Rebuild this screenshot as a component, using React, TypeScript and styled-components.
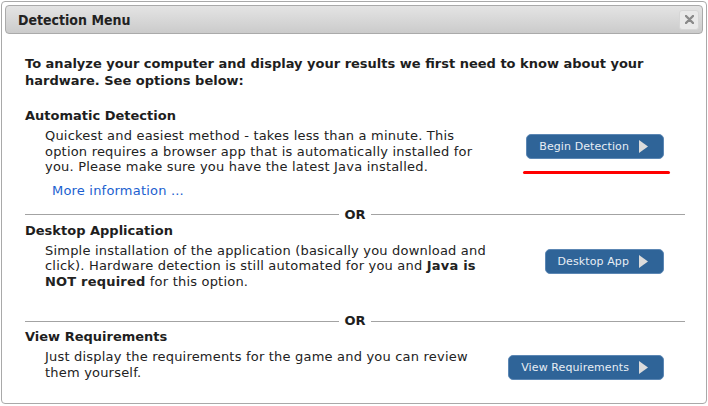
import React from "react";
import styled, { createGlobalStyle } from "styled-components";

const GlobalStyle = createGlobalStyle`
  html, body {
    margin: 0;
    padding: 0;
    background: #ffffff;
  }
`;

const Dialog = styled.div`
  margin: 1px;
  width: 706px;
  height: 403px;
  box-sizing: border-box;
  padding: 3px;
  border: 1px solid #a9a9a9;
  border-radius: 4px;
  background: #ffffff;
  font-family: "DejaVu Sans", Verdana, sans-serif;
  color: #222222;
`;

const TitleBar = styled.div`
  display: flex;
  align-items: center;
  justify-content: space-between;
  height: 29px;
  box-sizing: border-box;
  padding: 0 3px 0 12px;
  border: 1px solid #aaaaaa;
  border-radius: 4px;
  background: linear-gradient(#e4e4e4, #cbcbcb);
`;

const Title = styled.span`
  font-family: "DejaVu Sans Condensed", "DejaVu Sans", sans-serif;
  font-size: 14px;
  font-weight: bold;
  color: #222222;
`;

const CloseButton = styled.button`
  display: flex;
  align-items: center;
  justify-content: center;
  width: 20px;
  height: 20px;
  padding: 0;
  border: 1px solid #d6d6d6;
  border-radius: 3px;
  background: #e9e9e9;
  cursor: pointer;
`;

const Content = styled.div`
  padding: 21px 18px 0 20px;
`;

const Intro = styled.p`
  margin: 0;
  font-size: 13px;
  font-weight: bold;
  line-height: 17px;
  color: #1e1e1e;
`;

const Section = styled.section<{ $top: number; $bottom: number }>`
  margin-top: ${({ $top }) => $top}px;
  padding-bottom: ${({ $bottom }) => $bottom}px;
`;

const Heading = styled.h3`
  margin: 0;
  font-size: 13px;
  font-weight: bold;
  line-height: 17px;
  color: #1e1e1e;
`;

const Row = styled.div`
  display: flex;
  margin-top: 4px;
`;

const Description = styled.p`
  width: 446px;
  margin: 0;
  padding-left: 20px;
  font-size: 13px;
  line-height: 15.5px;
  letter-spacing: 0.2px;
  color: #222222;
`;

const ButtonCell = styled.div`
  flex: 1;
  display: flex;
  justify-content: flex-end;
  align-items: flex-start;
  padding: 6px 21px 0 0;
`;

const ButtonWrap = styled.div`
  position: relative;
`;

const ActionButton = styled.button`
  display: flex;
  align-items: center;
  gap: 10px;
  height: 25px;
  box-sizing: border-box;
  padding: 0 15px 0 12px;
  border: 1px solid #5c87b4;
  border-radius: 5px;
  background: #2f6498;
  color: #e8eef5;
  font-family: "DejaVu Sans", Verdana, sans-serif;
  font-size: 11px;
  letter-spacing: 0.1px;
  cursor: pointer;
`;

const Underline = styled.div`
  position: absolute;
  top: 37px;
  left: -3px;
  width: 147px;
  height: 3px;
  border-radius: 2px;
  background: #ff0000;
`;

const MoreLink = styled.a`
  display: block;
  margin-top: 8px;
  padding-left: 27px;
  font-size: 13px;
  line-height: 16px;
  letter-spacing: 0.2px;
  color: #1c5fd0;
  text-decoration: none;
`;

const Divider = styled.div`
  display: flex;
  align-items: center;
  gap: 5px;
  height: 14px;
`;

const Rule = styled.div`
  flex: 1;
  height: 1px;
  background: #a3a3a3;
`;

const OrLabel = styled.span`
  font-size: 13px;
  font-weight: bold;
  line-height: 14px;
  color: #1e1e1e;
`;

const Arrow = () => (
  <svg width="9" height="13" viewBox="0 0 9 13">
    <polygon points="0,0 9,6.5 0,13" fill="#dcdcdc" />
  </svg>
);

const CloseIcon = () => (
  <svg width="9" height="9" viewBox="0 0 9 9">
    <path d="M1 1 L8 8 M8 1 L1 8" stroke="#8a8a8a" strokeWidth="2.4" strokeLinecap="round" />
  </svg>
);

const OrDivider = () => (
  <Divider>
    <Rule />
    <OrLabel>OR</OrLabel>
    <Rule />
  </Divider>
);

const App = () => {
  return (
    <>
      <GlobalStyle />
      <Dialog>
        <TitleBar>
          <Title>Detection Menu</Title>
          <CloseButton aria-label="close">
            <CloseIcon />
          </CloseButton>
        </TitleBar>
        <Content>
          <Intro>
            To analyze your computer and display your results we first need to know about your
            hardware. See options below:
          </Intro>

          <Section $top={18} $bottom={9}>
            <Heading>Automatic Detection</Heading>
            <Row>
              <Description>
                Quickest and easiest method - takes less than a minute. This option requires a
                browser app that is automatically installed for you. Please make sure you have the
                latest Java installed.
              </Description>
              <ButtonCell>
                <ButtonWrap>
                  <ActionButton>
                    Begin Detection
                    <Arrow />
                  </ActionButton>
                  <Underline />
                </ButtonWrap>
              </ButtonCell>
            </Row>
            <MoreLink href="#">More information ...</MoreLink>
          </Section>

          <OrDivider />

          <Section $top={0} $bottom={25}>
            <Heading>Desktop Application</Heading>
            <Row>
              <Description>
                Simple installation of the application (basically you download and click).
                Hardware detection is still automated for you and <b>Java is NOT required</b> for
                this option.
              </Description>
              <ButtonCell>
                <ActionButton>
                  Desktop App
                  <Arrow />
                </ActionButton>
              </ButtonCell>
            </Row>
          </Section>

          <OrDivider />

          <Section $top={0} $bottom={0}>
            <Heading>View Requirements</Heading>
            <Row>
              <Description>
                Just display the requirements for the game and you can review them yourself.
              </Description>
              <ButtonCell>
                <ActionButton>
                  View Requirements
                  <Arrow />
                </ActionButton>
              </ButtonCell>
            </Row>
          </Section>
        </Content>
      </Dialog>
    </>
  );
};

export default App;
